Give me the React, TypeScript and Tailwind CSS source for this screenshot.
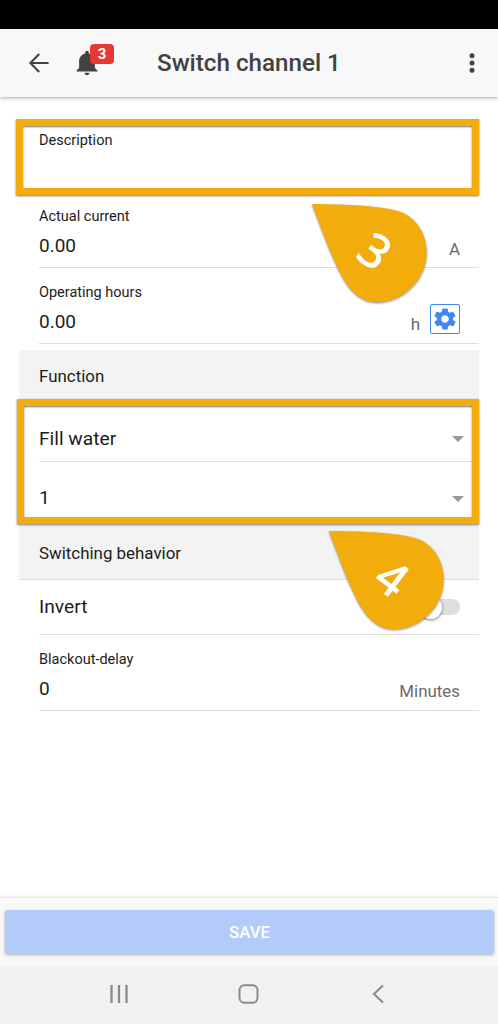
import type { ReactNode } from 'react';
import { IoMdNotifications, IoMdSettings } from 'react-icons/io';
import clsx from 'clsx';

function Header() {
  return (
    <header className="relative z-10 flex h-[68px] shrink-0 items-center bg-[#f8f8f8] pl-7 text-[#424242] shadow-[0_1px_4px_rgba(0,0,0,0.35)]">
      <svg width="22" height="22" viewBox="0 0 22 22" fill="none" stroke="currentColor" strokeWidth="2.1">
        <path d="M11.2 2 2.4 11l8.8 9M2.8 11h17.8" />
      </svg>
      <div className="relative ml-[22px]">
        <IoMdNotifications size={30} />
        <span className="absolute -top-[4px] left-[18px] flex h-5 w-6 items-center justify-center rounded-[4px] bg-[#e53935] text-[15px] font-bold text-white">
          3
        </span>
      </div>
      <h1 className="ml-[55px] text-[24.2px] font-medium whitespace-nowrap">Switch channel 1</h1>
      <svg className="mr-[23px] ml-auto" width="6" height="20" viewBox="0 0 6 20" fill="currentColor">
        <circle cx="3" cy="2.7" r="2.5" />
        <circle cx="3" cy="10" r="2.5" />
        <circle cx="3" cy="17.3" r="2.5" />
      </svg>
    </header>
  );
}

interface FieldProps {
  label: string;
  value: string;
  children?: ReactNode;
}

function Field({ label, value, children }: FieldProps) {
  return (
    <div className="ml-5 flex h-[76px] justify-between border-b border-[#dedede] pr-[19px]">
      <div className="pt-[15px]">
        <div className="text-[14.5px] leading-[20px]">{label}</div>
        <div className="mt-[7px] text-[19px] leading-[24px]">{value}</div>
      </div>
      <div className="flex items-end text-[#6b6b6b]">{children}</div>
    </div>
  );
}

function SelectRow({ value, divider = false }: { value: string; divider?: boolean }) {
  return (
    <div className={clsx('ml-5 flex h-[59px] items-center justify-between pt-[14px] pr-[15px] text-[19.2px]', divider && 'border-b border-[#dedede]')}>
      {value}
      <svg width="12" height="6" viewBox="0 0 12 6" fill="#999">
        <path d="M0 0h12L6 6z" />
      </svg>
    </div>
  );
}

function Section({ title, className }: { title: string; className?: string }) {
  return <h2 className={clsx('flex h-[53px] items-center bg-[#f3f3f3] pl-5 text-[16.9px]', className)}>{title}</h2>;
}

// Annotation drop, pointing at its top left corner
function Callout({ label, className }: { label: string; className: string }) {
  return (
    <svg
      className={clsx('absolute z-20 overflow-visible drop-shadow-[0_1px_1px_rgba(0,0,0,0.45)]', className)}
      width="116"
      height="100"
      viewBox="0 0 116 100"
    >
      <path
        d="M0 0C43 .3 73 2.500 89 8C105 14 114.700 31 114.700 48C114.700 76 91 98.200 65 98.200C52 98.200 42 91 34 79C23 62 12 32 0 0Z"
        fill="#f2ac0c"
      />
      <text
        transform="translate(63 47) rotate(37)"
        y="17"
        textAnchor="middle"
        fill="#fff"
        stroke="#fff"
        strokeWidth="1.2"
        className="font-['Open_Sans',sans-serif] text-[46.5px]"
      >
        {label}
      </text>
    </svg>
  );
}

const FRAME = 'absolute z-10 border-[7px] border-[#f2ac0c] shadow-[0_1px_2px_rgba(0,0,0,0.55),inset_0_1px_2px_rgba(0,0,0,0.55)]';

export default function App() {
  return (
    <div className="flex h-[1024px] w-[498px] flex-col overflow-hidden bg-white font-[Roboto,sans-serif] text-[#1c1c1c]">
      <div className="h-[29px] shrink-0 bg-black" />
      <Header />

      <main className="flex-1 pt-[19px] pl-[19px]">
        <div className="w-[460px]">
          <div className="relative h-[76px]">
            <div className="ml-5 pt-[15px] text-[14.5px] leading-[20px]">Description</div>
            <div className={clsx(FRAME, 'top-[3px] -left-[3px] h-[76px] w-[463px]')} />
          </div>
          <div className="relative">
            <Field label="Actual current" value="0.00">
              <span className="mb-[5px] text-[17px]">A</span>
            </Field>
            <Callout label="3" className="top-[12px] left-[293px]" />
          </div>
          <Field label="Operating hours" value="0.00">
            <span className="mr-[10px] mb-[6px] text-[17px]">h</span>
            <button className="mb-[9px] flex h-[30px] w-[30px] items-center justify-center rounded-[2px] border-[1.5px] border-[#4285f4] text-[#4285f4]">
              <IoMdSettings size={26} className="shrink-0" />
            </button>
          </Field>
          <div className="mt-[6px]">
            <Section title="Function" />
          </div>
          <div className="relative">
            <SelectRow value="Fill water" divider />
            <SelectRow value="1" />
            <div className={clsx(FRAME, '-top-[4px] -left-[2px] h-[125px] w-[462px]')} />
          </div>
          <div className="relative mt-[5px]">
            <div className="border-b border-[#dedede]">
              <Section title="Switching behavior" className="pt-[2px]" />
            </div>
            <div className="ml-5 flex h-[55px] items-center justify-between border-b border-[#dedede] pr-[19px] text-[19.2px]">
              Invert
              <span className="flex h-4 w-[41px] items-center rounded-full bg-[#dedede]">
                <span className="size-[23px] rounded-full bg-white shadow-[0_1px_3px_rgba(0,0,0,0.5)]" />
              </span>
            </div>
            <Callout label="4" className="top-[4.5px] left-[309.5px]" />
          </div>
          <Field label="Blackout-delay" value="0">
            <span className="mb-[6px] text-[16.9px]">Minutes</span>
          </Field>
        </div>
      </main>

      <footer className="h-[69px] shrink-0 border-t border-[#e9e9e9] bg-[#f8f8f8] pt-[12px] pr-1 pl-[5px] shadow-[0_-1px_2px_rgba(0,0,0,0.08)]">
        <button className="h-[44px] w-full rounded-[3px] bg-[#b3cbfa] pt-[2px] text-[16.8px] font-medium text-white shadow-[0_1px_3px_rgba(0,0,0,0.3)]">
          SAVE
        </button>
      </footer>
      <nav className="flex h-[58px] shrink-0 items-center bg-[#f1f1f1] pb-[3px] pl-[109px] text-[#8a8a8a]">
        <svg width="20" height="20" viewBox="0 0 20 20" fill="none" stroke="currentColor" strokeWidth="2.300">
          <path d="M2.500 1v18M10 1v18M17.500 1v18" />
        </svg>
        <svg className="ml-[109px]" width="22" height="20" viewBox="0 0 22 20" fill="none" stroke="currentColor" strokeWidth="2">
          <rect x="1.500" y="1.200" width="18" height="17.600" rx="5" />
        </svg>
        <svg className="ml-[112px]" width="12" height="20" viewBox="0 0 12 20" fill="none" stroke="currentColor" strokeWidth="2">
          <path d="M11 1.500 2 10l9 8.500" />
        </svg>
      </nav>
    </div>
  );
}
